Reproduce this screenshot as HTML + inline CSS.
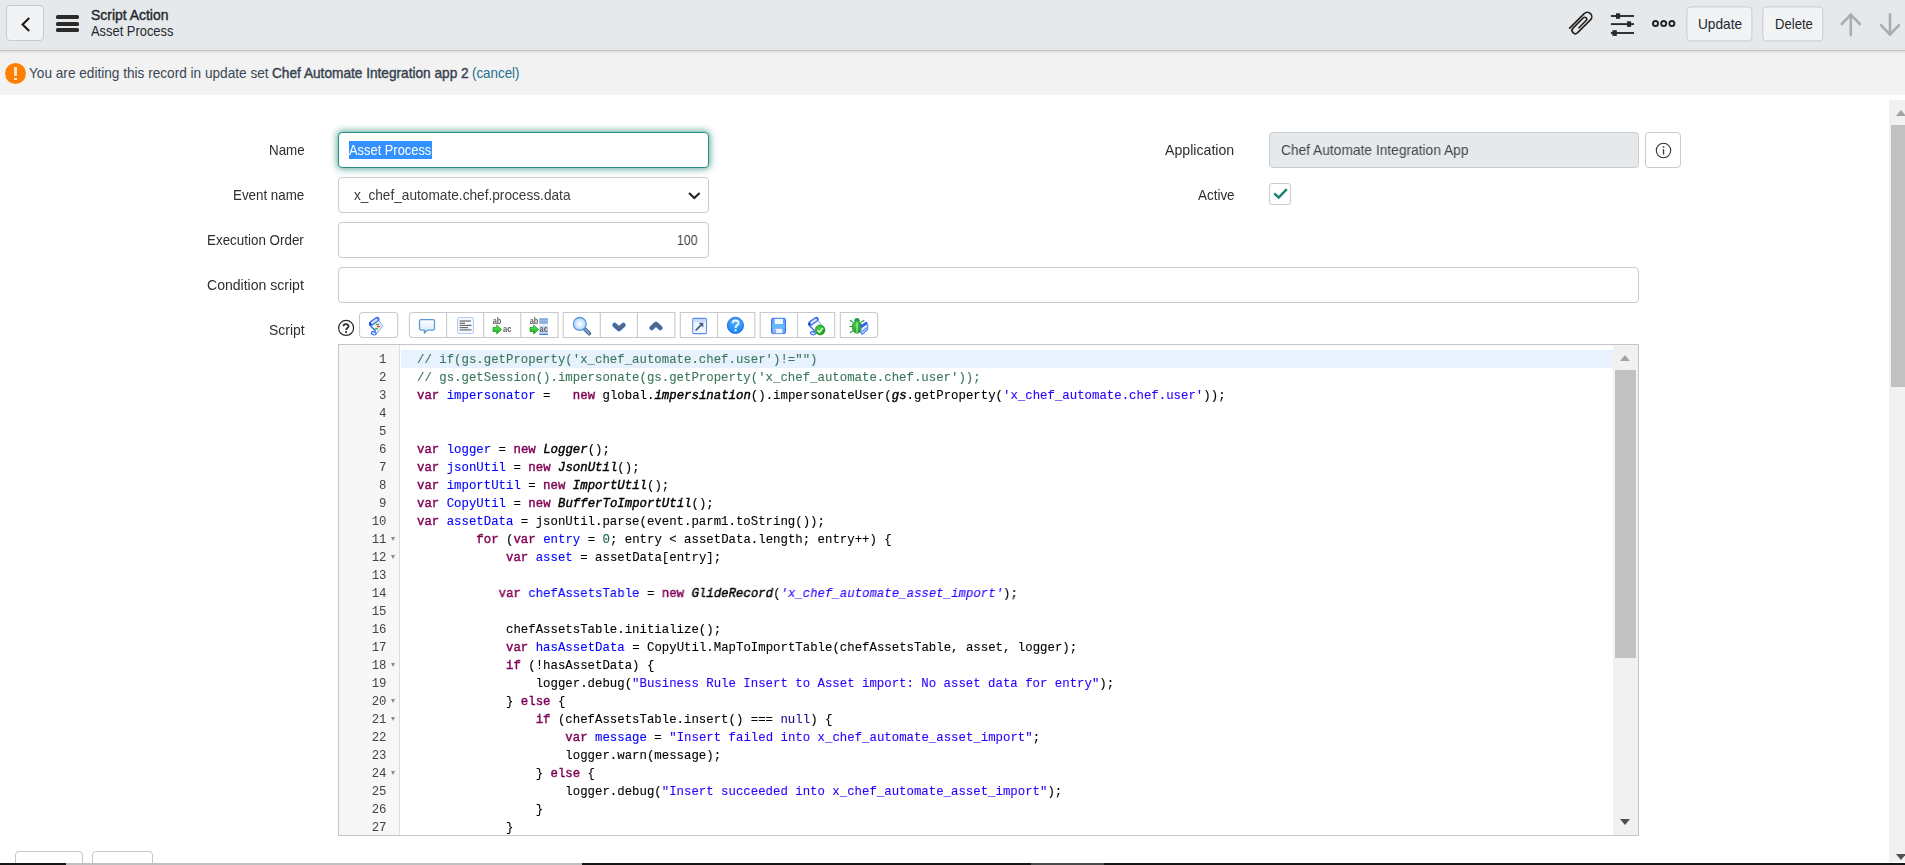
<!DOCTYPE html>
<html><head><meta charset="utf-8"><title>Script Action</title><style>
*{box-sizing:border-box;margin:0;padding:0}
html,body{width:1905px;height:865px;overflow:hidden;background:#fff}
body{position:relative;font-family:"Liberation Sans", sans-serif;font-size:14.5px;color:#2e2e2e}
.abs,.t,.ln,.cl,.fold{position:absolute}
.t{white-space:pre;line-height:1;transform-origin:0 0;display:block}
#hdr{left:0;top:0;width:1905px;height:51px;background:#e6e9eb;border-bottom:1px solid #c2c3c4}
#hshadow{left:0;top:51px;width:1905px;height:3px;background:linear-gradient(#dcdddd,#f2f2f2)}
#note{left:0;top:50px;width:1905px;height:45px;background:#f2f2f2}
.btn{background:#f2f3f5;border:1px solid #c9cacb;border-radius:4px}
.inp{background:#fff;border:1px solid #cbcbcb;border-radius:4px}
.ln,.cl{font-family:"Liberation Mono", monospace;font-size:13.6px;line-height:18px;height:18px;white-space:pre}
.ln{left:339px;width:52.25px;text-align:right;color:#444;transform:scaleX(0.9092);transform-origin:0 0;padding-top:1.00px}
.cl{left:417.3px;color:#000;transform:scaleX(0.9092);transform-origin:0 0;padding-top:1.00px;-webkit-text-stroke:0.12px}
.fold{left:390.9px;width:0;height:0;border-left:2.7px solid transparent;border-right:2.7px solid transparent;border-top:4.2px solid #8a8a8a}
.k{color:#7f0055;-webkit-text-stroke:0.45px #7f0055}
.d{color:#0000ff}
.s{color:#2a00ff}
.si{color:#2a00ff;font-style:italic}
.c{color:#3b775a}
.n{color:#116644}
.a{color:#221199}
.g{font-style:italic;color:#000;-webkit-text-stroke:0.45px #000}
.tb{top:312px;height:26px;border:1px solid #c9c9c9;background:#fff}
.tbd{top:312px;height:26px;width:1px;background:#c9c9c9}
</style></head><body>
<div id="note" class="abs"></div>
<div id="hdr" class="abs"></div>
<div id="hshadow" class="abs"></div>
<div class="abs btn" style="left:6px;top:5px;width:38px;height:36px"></div>
<svg class="abs" style="left:18px;top:13px" width="16" height="22" viewBox="0 0 16 22"><path d="M11.2 4.9 L4.6 11.45 L11.2 18" fill="none" stroke="#1a1a1a" stroke-width="2.1"/></svg>
<div class="abs" style="left:56px;top:15.0px;width:23.3px;height:3.8px;border-radius:1.6px;background:#2a2a2a"></div>
<div class="abs" style="left:56px;top:22.0px;width:23.3px;height:3.8px;border-radius:1.6px;background:#2a2a2a"></div>
<div class="abs" style="left:56px;top:28.1px;width:23.3px;height:3.8px;border-radius:1.6px;background:#2a2a2a"></div>
<div class="abs btn" style="left:1686px;top:6px;width:66.1px;height:35.1px;transform:translate(.4px,.4px)"></div>
<div class="abs btn" style="left:1762px;top:6px;width:61.3px;height:35.1px;transform:translate(.3px,.4px)"></div>
<svg class="abs" style="left:1560px;top:0px" width="345" height="50" viewBox="1560 0 345 50">
<g transform="translate(1568.9,28.85) rotate(-45)"><path d="M0.4 0 L21.6 0 A4.45 4.45 0 0 1 21.6 8.9 L3.45 8.9 A3.25 3.25 0 0 1 3.45 2.4 L18.05 2.4 A1.95 1.95 0 0 1 18.05 6.3 L7.2 6.3" fill="none" stroke="#26221f" stroke-width="1.65"/></g>
<path d="M1610.9 16.0 H1634" stroke="#2a2a2a" stroke-width="1.9"/>
<path d="M1610.9 24.1 H1634" stroke="#2a2a2a" stroke-width="1.9"/>
<path d="M1610.9 33.0 H1634" stroke="#2a2a2a" stroke-width="1.9"/>
<rect x="1616" y="13.3" width="4.1" height="5.5" fill="#2a2a2a"/>
<rect x="1627" y="21.3" width="4.1" height="5.6" fill="#2a2a2a"/>
<rect x="1612.4" y="30.2" width="4.4" height="5.7" fill="#2a2a2a"/>
<circle cx="1655.5" cy="23.5" r="2.55" fill="none" stroke="#242424" stroke-width="1.9"/>
<circle cx="1663.7" cy="23.5" r="2.55" fill="none" stroke="#242424" stroke-width="1.9"/>
<circle cx="1671.9" cy="23.5" r="2.55" fill="none" stroke="#242424" stroke-width="1.9"/>
<path d="M1850.8 35.3 V14.6 M1841.8 24 L1850.8 14.6 L1859.8 24" fill="none" stroke="#aaadaf" stroke-width="2.6" stroke-linecap="round" stroke-linejoin="miter"/>
<path d="M1890 14.2 V34.6 M1881 25.2 L1890 34.6 L1899 25.2" fill="none" stroke="#aaadaf" stroke-width="2.6" stroke-linecap="round" stroke-linejoin="miter"/>
</svg>
<div class="abs" style="left:5px;top:62.9px;width:21px;height:21px;border-radius:50%;background:#ff8000"></div>
<div class="abs" style="left:13.8px;top:66.6px;width:3.2px;height:9px;background:#fde0c6;border-radius:0.6px"></div>
<div class="abs" style="left:13.8px;top:77.7px;width:3.2px;height:2.6px;background:#fde0c6"></div>
<div class="abs inp" style="left:338px;top:132px;width:371px;height:36px;border-color:#278f7f;box-shadow:0 0 7px 1px rgba(30,133,117,.72)"></div>
<div class="abs" style="left:349px;top:141px;width:83px;height:18px;background:#3390ff"></div>
<div class="abs inp" style="left:338px;top:177px;width:371px;height:36px"></div>
<svg class="abs" style="left:686px;top:189px" width="16" height="12" viewBox="0 0 16 12"><path d="M3 4.1 L8.3 9.1 L13.6 4.1" fill="none" stroke="#1f1f1f" stroke-width="2"/></svg>
<div class="abs inp" style="left:338px;top:222px;width:371px;height:36px"></div>
<div class="abs inp" style="left:338px;top:267px;width:1301px;height:36px"></div>
<div class="abs inp" style="left:1269px;top:132px;width:370px;height:36px;background:#e6e9eb;border-color:#c9cdd0"></div>
<div class="abs inp" style="left:1645px;top:132px;width:36px;height:36px"></div>
<svg class="abs" style="left:1655.25px;top:142px" width="17" height="17" viewBox="0 0 17 17"><circle cx="8.5" cy="8.5" r="7.2" fill="none" stroke="#333" stroke-width="1.1"/><rect x="7.9" y="7.2" width="1.3" height="5.3" fill="#333"/><rect x="7.8" y="4.3" width="1.5" height="1.5" fill="#333"/></svg>
<div class="abs inp" style="left:1269px;top:183px;width:22px;height:22px;border-radius:3px"></div>
<svg class="abs" style="left:1271px;top:185px" width="18" height="18" viewBox="0 0 18 18"><path d="M3.3 8.5 L7.7 12.5 L15.8 4.1" fill="none" stroke="#1a8073" stroke-width="2.4"/></svg>
<svg class="abs" style="left:330px;top:305px;will-change:transform" width="560" height="40" viewBox="330 305 560 40">
<defs>
<linearGradient id="gb" x1="0" y1="0" x2="0" y2="1"><stop offset="0" stop-color="#ffffff"/><stop offset="1" stop-color="#d6e6fa"/></linearGradient>
<radialGradient id="gl" cx="0.5" cy="0.5" r="0.55"><stop offset="0" stop-color="#ffffff"/><stop offset="1" stop-color="#a9d3ff"/></radialGradient>
<radialGradient id="gh" cx="0.5" cy="0.3" r="0.8"><stop offset="0" stop-color="#55b1ff"/><stop offset="1" stop-color="#0a7cf5"/></radialGradient>
<radialGradient id="gg" cx="0.4" cy="0.35" r="0.8"><stop offset="0" stop-color="#4fd04f"/><stop offset="1" stop-color="#0e8f0e"/></radialGradient>
<linearGradient id="ga" x1="0" y1="0" x2="0" y2="1"><stop offset="0" stop-color="#6df06d"/><stop offset="1" stop-color="#0ea80e"/></linearGradient>
</defs>
<path d="M363.0 312.5 L394.3 312.5 A3.5 3.5 0 0 1 397.8 316.0 L397.8 334.0 A3.5 3.5 0 0 1 394.3 337.5 L363.0 337.5 A3.5 3.5 0 0 1 359.5 334.0 L359.5 316.0 A3.5 3.5 0 0 1 363.0 312.5 Z" fill="#fff" stroke="#c9c9c9" stroke-width="1.1"/>
<path d="M412.9 312.5 L558.0 312.5 L558.0 337.5 L412.9 337.5 A3.5 3.5 0 0 1 409.4 334.0 L409.4 316.0 A3.5 3.5 0 0 1 412.9 312.5 Z" fill="#fff" stroke="#c9c9c9" stroke-width="1.1"/>
<path d="M446.6 312.5 L446.6 337.5" stroke="#c9c9c9" stroke-width="1.1"/>
<path d="M483.7 312.5 L483.7 337.5" stroke="#c9c9c9" stroke-width="1.1"/>
<path d="M520.8 312.5 L520.8 337.5" stroke="#c9c9c9" stroke-width="1.1"/>
<path d="M563.2 312.5 L674.8 312.5 L674.8 337.5 L563.2 337.5 L563.2 312.5 Z" fill="#fff" stroke="#c9c9c9" stroke-width="1.1"/>
<path d="M600.3 312.5 L600.3 337.5" stroke="#c9c9c9" stroke-width="1.1"/>
<path d="M637.4 312.5 L637.4 337.5" stroke="#c9c9c9" stroke-width="1.1"/>
<path d="M680.3 312.5 L754.8 312.5 L754.8 337.5 L680.3 337.5 L680.3 312.5 Z" fill="#fff" stroke="#c9c9c9" stroke-width="1.1"/>
<path d="M717.5 312.5 L717.5 337.5" stroke="#c9c9c9" stroke-width="1.1"/>
<path d="M760.2 312.5 L834.7 312.5 L834.7 337.5 L760.2 337.5 L760.2 312.5 Z" fill="#fff" stroke="#c9c9c9" stroke-width="1.1"/>
<path d="M797.5 312.5 L797.5 337.5" stroke="#c9c9c9" stroke-width="1.1"/>
<path d="M840.3 312.5 L874.2 312.5 A3.5 3.5 0 0 1 877.7 316.0 L877.7 334.0 A3.5 3.5 0 0 1 874.2 337.5 L840.3 337.5 L840.3 312.5 Z" fill="#fff" stroke="#c9c9c9" stroke-width="1.1"/>
<circle cx="346.1" cy="327.9" r="7.5" fill="none" stroke="#2b2b2b" stroke-width="1.25"/>
<path d="M343.5 326.3 C343.5 323.6 348.6 323.5 348.6 326.2 C348.6 328 346.1 328 346.1 330.1" fill="none" stroke="#2b2b2b" stroke-width="1.75"/>
<rect x="345.2" y="331.1" width="1.8" height="1.8" fill="#2b2b2b"/>
<g transform="translate(0,0)">
<path d="M370.3 325.3 L378.3 319.8 L382.8 325.9 L376.4 334 L373 333.6 L375.3 330.8 Z" fill="#eef4ff" stroke="#7ea4f7" stroke-width="1" stroke-linejoin="round"/>
<path d="M370.2 325.6 L375.4 330.9" stroke="#3f6fe8" stroke-width="1.4" stroke-linecap="round" fill="none"/>
<path d="M371.4 323.2 L377.2 319.3" stroke="#3466e6" stroke-width="4.7" stroke-linecap="round" fill="none"/>
<path d="M372.2 322.7 L376.6 319.8" stroke="#cfe0ff" stroke-width="2.5" stroke-linecap="round" fill="none"/>
<path d="M369.6 324.6 L370.4 323.2" stroke="#1644c8" stroke-width="1.6" stroke-linecap="round" fill="none"/>
<ellipse cx="373.7" cy="333.3" rx="2.5" ry="1.5" transform="rotate(14 373.7 333.3)" fill="#dbe7ff" stroke="#3f74ee" stroke-width="1.1"/>
</g>
<rect x="375.8" y="323.7" width="3.3" height="1.4" fill="#2fc42f"/>
<rect x="376.9" y="325.8" width="3.3" height="1.4" rx="0.7" fill="#ee3a1c"/>
<rect x="374.7" y="327.9" width="3.3" height="1.5" fill="#2fc42f"/>
<path d="M421 319.6 H433 Q434.5 319.6 434.5 321.1 V328.6 Q434.5 330.1 433 330.1 H427.3 L424.3 333.3 L424.6 330.1 H421 Q419.5 330.1 419.5 328.6 V321.1 Q419.5 319.6 421 319.6 Z" fill="url(#gb)" stroke="#5b98d8" stroke-width="1.25" stroke-linejoin="round"/>
<rect x="457.6" y="317.5" width="15.8" height="16" rx="1.6" fill="#f4f8ff" stroke="#b4c6fb" stroke-width="1"/>
<path d="M459.6 321 L471 321" stroke="#6a6a6a" stroke-width="1.2"/>
<path d="M459.6 323.2 L465 323.2" stroke="#6a6a6a" stroke-width="1.2"/>
<path d="M459.6 325.4 L471.5 325.4" stroke="#6a6a6a" stroke-width="1.2"/>
<path d="M459.6 327.6 L468 327.6" stroke="#6a6a6a" stroke-width="1.2"/>
<path d="M459.6 329.9 L471.5 329.9" stroke="#6a6a6a" stroke-width="1.2"/>
<text x="492.7" y="323.6" font-family="Liberation Sans, sans-serif" font-size="8.6" font-weight="700" fill="#5a5a5a" textLength="8.6" lengthAdjust="spacingAndGlyphs">ab</text>
<path d="M493 327.5 H496.7 V325 L501.6 329.5 L496.7 334 V331.5 H493 Z" fill="url(#ga)" stroke="#0c9a0c" stroke-width="0.7" stroke-linejoin="round"/>
<text x="503" y="331.7" font-family="Liberation Sans, sans-serif" font-size="8.6" font-weight="700" fill="#5a5a5a" textLength="8.4" lengthAdjust="spacingAndGlyphs">ac</text>
<text x="529.7" y="323.6" font-family="Liberation Sans, sans-serif" font-size="8.6" font-weight="700" fill="#5a5a5a" textLength="8.6" lengthAdjust="spacingAndGlyphs">ab</text>
<path d="M530 327.5 H533.7 V325 L538.6 329.5 L533.7 334 V331.5 H530 Z" fill="url(#ga)" stroke="#0c9a0c" stroke-width="0.7" stroke-linejoin="round"/>
<rect x="539.3" y="318" width="8.6" height="6.2" fill="#a9c4e8"/>
<path d="M539.3 319.3 H547.9" stroke="#6f9ad6" stroke-width="0.8"/>
<path d="M539.3 321.1 H547.9" stroke="#6f9ad6" stroke-width="0.8"/>
<path d="M539.3 322.9 H547.9" stroke="#6f9ad6" stroke-width="0.8"/>
<rect x="539.3" y="325.6" width="8.6" height="8.2" fill="#c9dbf3"/>
<path d="M539.3 334.3 H547.9" stroke="#2f6fea" stroke-width="1.2"/>
<text x="539.6" y="332.2" font-family="Liberation Sans, sans-serif" font-size="8.6" font-weight="700" fill="#5a5a5a" textLength="8.2" lengthAdjust="spacingAndGlyphs">ac</text>
<path d="M584.6 328.9 L589.4 333.6" stroke="#3f4f66" stroke-width="3.6" stroke-linecap="round"/>
<path d="M585.2 329.5 L589.2 333.4" stroke="#6aa2e6" stroke-width="2.2" stroke-linecap="round"/>
<circle cx="579.8" cy="323.9" r="6.4" fill="url(#gl)" stroke="#5a97dc" stroke-width="1.3"/>
<path d="M614.6 325 L619 329 L623.4 325" fill="none" stroke="#2f74d0" stroke-width="4.6" stroke-linecap="round" stroke-linejoin="round"/>
<path d="M614.6 325 L619 329 L623.4 325" fill="none" stroke="#5e6670" stroke-width="2.4" stroke-linecap="round" stroke-linejoin="round"/>
<path d="M651.6 328 L656 324 L660.4 328" fill="none" stroke="#2f74d0" stroke-width="4.6" stroke-linecap="round" stroke-linejoin="round"/>
<path d="M651.6 328 L656 324 L660.4 328" fill="none" stroke="#5e6670" stroke-width="2.4" stroke-linecap="round" stroke-linejoin="round"/>
<rect x="692.7" y="318.4" width="13.8" height="15.2" rx="1.2" fill="#f1f6fd" stroke="#5b8df0" stroke-width="1.1"/>
<rect x="693.3" y="319" width="12.6" height="3" fill="#c6dcf8"/>
<path d="M696.2 329.9 L702 324.1" stroke="#46618c" stroke-width="1.8" stroke-linecap="round"/>
<path d="M698.6 322.8 H703.3 V327.5 Z" fill="#46618c"/>
<circle cx="735.4" cy="325.4" r="8.1" fill="url(#gh)" stroke="#2a66d4" stroke-width="0.9"/>
<path d="M732.6 323.2 C732.6 319.8 738.6 319.6 738.6 323 C738.6 325.3 735.6 325.3 735.6 327.9" fill="none" stroke="#f4f9ff" stroke-width="1.9"/>
<rect x="734.6" y="329.3" width="2" height="2" fill="#f4f9ff"/>
<rect x="771.5" y="318.3" width="14" height="15.3" rx="1.5" fill="#58a6ff" stroke="#3b70ea" stroke-width="1"/>
<rect x="774.6" y="318.9" width="8.3" height="5.2" fill="#f3f8ff"/>
<rect x="772.1" y="324.2" width="12.8" height="3.9" fill="#62bcf7"/>
<rect x="773.7" y="328.7" width="8.8" height="4.6" fill="#e6f0fd"/>
<rect x="774.4" y="329.3" width="1.2" height="4" fill="#5b7fe8"/>
<g transform="translate(439.2,0)">
<path d="M370.3 325.3 L378.3 319.8 L382.8 325.9 L376.4 334 L373 333.6 L375.3 330.8 Z" fill="#eef4ff" stroke="#7ea4f7" stroke-width="1" stroke-linejoin="round"/>
<path d="M370.2 325.6 L375.4 330.9" stroke="#3f6fe8" stroke-width="1.4" stroke-linecap="round" fill="none"/>
<path d="M371.4 323.2 L377.2 319.3" stroke="#3466e6" stroke-width="4.7" stroke-linecap="round" fill="none"/>
<path d="M372.2 322.7 L376.6 319.8" stroke="#cfe0ff" stroke-width="2.5" stroke-linecap="round" fill="none"/>
<path d="M369.6 324.6 L370.4 323.2" stroke="#1644c8" stroke-width="1.6" stroke-linecap="round" fill="none"/>
<ellipse cx="373.7" cy="333.3" rx="2.5" ry="1.5" transform="rotate(14 373.7 333.3)" fill="#dbe7ff" stroke="#3f74ee" stroke-width="1.1"/>
</g>
<circle cx="820.1" cy="330" r="4.9" fill="url(#gg)" stroke="#0b8a0b" stroke-width="0.6"/>
<path d="M817.4 330.2 L819.4 332.3 L822.9 327.9" fill="none" stroke="#eaffea" stroke-width="1.5"/>
<path d="M852.5 322 L850.3 320.5" stroke="#1f9d4a" stroke-width="1.2" stroke-linecap="round"/>
<path d="M852 326.5 L849.9 326.5" stroke="#1f9d4a" stroke-width="1.2" stroke-linecap="round"/>
<path d="M852.5 331 L850.3 332.5" stroke="#1f9d4a" stroke-width="1.2" stroke-linecap="round"/>
<path d="M861.5 322 L863.9 320.5" stroke="#1f9d4a" stroke-width="1.2" stroke-linecap="round"/>
<ellipse cx="857" cy="320.2" rx="2.6" ry="2.2" fill="#1f9d4a"/>
<ellipse cx="857" cy="327" rx="4.7" ry="6.2" fill="url(#gg)" stroke="#189a3c" stroke-width="0.8"/>
<path d="M857 321.5 V332.8" stroke="#c9f5c9" stroke-width="0.9"/>
<path d="M861.2 327 L866.4 323.2 L867.8 325.2 L867.6 329.5 L862.4 334.4 L860.6 332.6 Z" fill="#dbe7ff" stroke="#4c80f0" stroke-width="1.1" stroke-linejoin="round"/>
<path d="M861.6 326.4 L866.2 323.1" stroke="#2f62e6" stroke-width="2.6" stroke-linecap="round"/>
<path d="M861.3 332.4 L866.8 327.6" stroke="#4c80f0" stroke-width="1.1"/>
</svg>
<div class="abs" style="left:338px;top:344px;width:1301px;height:492px;border:1px solid #c6c6c6;background:#fff"></div>
<div class="abs" style="left:339px;top:345px;width:61px;height:490px;background:#f7f7f7;border-right:1px solid #ddd"></div>
<div class="abs" style="left:401px;top:350px;width:1212px;height:17.5px;background:#e8f2ff"></div>
<div class="abs" style="left:1613px;top:345px;width:25px;height:490px;background:#f1f1f1"></div>
<div class="abs" style="left:1615px;top:370px;width:21px;height:288px;background:#c1c1c1"></div>
<div class="abs" style="left:1619.9px;top:355px;width:0;height:0;border-left:5.6px solid transparent;border-right:5.6px solid transparent;border-bottom:6px solid #a3a3a3"></div>
<div class="abs" style="left:1619.9px;top:819px;width:0;height:0;border-left:5.6px solid transparent;border-right:5.6px solid transparent;border-top:6px solid #505050"></div>
<div class="abs" style="left:0;top:0;width:0;height:0;will-change:transform">
<div class="ln" style="top:349.5px">1</div>
<div class="cl" style="top:349.5px"><span class="c">// if(gs.getProperty('x_chef_automate.chef.user')!="")</span></div>
<div class="ln" style="top:367.5px">2</div>
<div class="cl" style="top:367.5px"><span class="c">// gs.getSession().impersonate(gs.getProperty('x_chef_automate.chef.user'));</span></div>
<div class="ln" style="top:385.5px">3</div>
<div class="cl" style="top:385.5px"><span class="k">var</span> <span class="d">impersonator</span> =   <span class="k">new</span> global.<span class="g">impersination</span>().impersonateUser(<span class="g">gs</span>.getProperty(<span class="s">'x_chef_automate.chef.user'</span>));</div>
<div class="ln" style="top:403.5px">4</div>
<div class="ln" style="top:421.5px">5</div>
<div class="ln" style="top:439.5px">6</div>
<div class="cl" style="top:439.5px"><span class="k">var</span> <span class="d">logger</span> = <span class="k">new</span> <span class="g">Logger</span>();</div>
<div class="ln" style="top:457.5px">7</div>
<div class="cl" style="top:457.5px"><span class="k">var</span> <span class="d">jsonUtil</span> = <span class="k">new</span> <span class="g">JsonUtil</span>();</div>
<div class="ln" style="top:475.5px">8</div>
<div class="cl" style="top:475.5px"><span class="k">var</span> <span class="d">importUtil</span> = <span class="k">new</span> <span class="g">ImportUtil</span>();</div>
<div class="ln" style="top:493.5px">9</div>
<div class="cl" style="top:493.5px"><span class="k">var</span> <span class="d">CopyUtil</span> = <span class="k">new</span> <span class="g">BufferToImportUtil</span>();</div>
<div class="ln" style="top:511.5px">10</div>
<div class="cl" style="top:511.5px"><span class="k">var</span> <span class="d">assetData</span> = jsonUtil.parse(event.parm1.toString());</div>
<div class="ln" style="top:529.5px">11</div>
<div class="fold" style="top:536.7px"></div>
<div class="cl" style="top:529.5px">        <span class="k">for</span> (<span class="k">var</span> <span class="d">entry</span> = <span class="n">0</span>; entry &lt; assetData.length; entry++) {</div>
<div class="ln" style="top:547.5px">12</div>
<div class="fold" style="top:554.7px"></div>
<div class="cl" style="top:547.5px">            <span class="k">var</span> <span class="d">asset</span> = assetData[entry];</div>
<div class="ln" style="top:565.5px">13</div>
<div class="ln" style="top:583.5px">14</div>
<div class="cl" style="top:583.5px">           <span class="k">var</span> <span class="d">chefAssetsTable</span> = <span class="k">new</span> <span class="g">GlideRecord</span>(<span class="si">'x_chef_automate_asset_import'</span>);</div>
<div class="ln" style="top:601.5px">15</div>
<div class="ln" style="top:619.5px">16</div>
<div class="cl" style="top:619.5px">            chefAssetsTable.initialize();</div>
<div class="ln" style="top:637.5px">17</div>
<div class="cl" style="top:637.5px">            <span class="k">var</span> <span class="d">hasAssetData</span> = CopyUtil.MapToImportTable(chefAssetsTable, asset, logger);</div>
<div class="ln" style="top:655.5px">18</div>
<div class="fold" style="top:662.7px"></div>
<div class="cl" style="top:655.5px">            <span class="k">if</span> (!hasAssetData) {</div>
<div class="ln" style="top:673.5px">19</div>
<div class="cl" style="top:673.5px">                logger.debug(<span class="s">"Business Rule Insert to Asset import: No asset data for entry"</span>);</div>
<div class="ln" style="top:691.5px">20</div>
<div class="fold" style="top:698.7px"></div>
<div class="cl" style="top:691.5px">            } <span class="k">else</span> {</div>
<div class="ln" style="top:709.5px">21</div>
<div class="fold" style="top:716.7px"></div>
<div class="cl" style="top:709.5px">                <span class="k">if</span> (chefAssetsTable.insert() === <span class="a">null</span>) {</div>
<div class="ln" style="top:727.5px">22</div>
<div class="cl" style="top:727.5px">                    <span class="k">var</span> <span class="d">message</span> = <span class="s">"Insert failed into x_chef_automate_asset_import"</span>;</div>
<div class="ln" style="top:745.5px">23</div>
<div class="cl" style="top:745.5px">                    logger.warn(message);</div>
<div class="ln" style="top:763.5px">24</div>
<div class="fold" style="top:770.7px"></div>
<div class="cl" style="top:763.5px">                } <span class="k">else</span> {</div>
<div class="ln" style="top:781.5px">25</div>
<div class="cl" style="top:781.5px">                    logger.debug(<span class="s">"Insert succeeded into x_chef_automate_asset_import"</span>);</div>
<div class="ln" style="top:799.5px">26</div>
<div class="cl" style="top:799.5px">                }</div>
<div class="ln" style="top:817.5px">27</div>
<div class="cl" style="top:817.5px">            }</div>
<span class="t" style='left:268.50px;top:142.73px;font-size:14.5px;font-weight:400;color:#2e2e2e;transform:scaleX(0.9228);'>Name</span>
<span class="t" style='left:232.90px;top:187.73px;font-size:14.5px;font-weight:400;color:#2e2e2e;transform:scaleX(0.9213);'>Event name</span>
<span class="t" style='left:207.40px;top:232.73px;font-size:14.5px;font-weight:400;color:#2e2e2e;transform:scaleX(0.9238);'>Execution Order</span>
<span class="t" style='left:207.40px;top:277.73px;font-size:14.5px;font-weight:400;color:#2e2e2e;transform:scaleX(0.9686);'>Condition script</span>
<span class="t" style='left:268.50px;top:322.73px;font-size:14.5px;font-weight:400;color:#2e2e2e;transform:scaleX(0.9628);'>Script</span>
<span class="t" style='left:1165.40px;top:142.73px;font-size:14.5px;font-weight:400;color:#2e2e2e;transform:scaleX(0.9755);'>Application</span>
<span class="t" style='left:1198.00px;top:187.73px;font-size:14.5px;font-weight:400;color:#2e2e2e;transform:scaleX(0.9266);'>Active</span>
<span class="t" style='left:349.30px;top:142.73px;font-size:14.5px;font-weight:400;color:#ffffff;transform:scaleX(0.8881);'>Asset Process</span>
<span class="t" style='left:353.50px;top:187.73px;font-size:14.5px;font-weight:400;color:#3a3a3a;transform:scaleX(0.9424);'>x_chef_automate.chef.process.data</span>
<span class="t" style='left:677.00px;top:232.73px;font-size:14.5px;font-weight:400;color:#3a3a3a;transform:scaleX(0.8470);'>100</span>
<span class="t" style='left:1280.50px;top:142.73px;font-size:14.5px;font-weight:400;color:#444;transform:scaleX(0.9494);'>Chef Automate Integration App</span>
</div>
<div class="abs" style="left:1889px;top:100px;width:16px;height:762px;background:#f1f1f1"></div>
<div class="abs" style="left:1891px;top:125px;width:14px;height:262px;background:#c1c1c1"></div>
<div class="abs" style="left:1895.8px;top:110px;width:0;height:0;border-left:5.6px solid transparent;border-right:5.6px solid transparent;border-bottom:6px solid #a3a3a3"></div>
<div class="abs" style="left:1895.8px;top:854px;width:0;height:0;border-left:5.6px solid transparent;border-right:5.6px solid transparent;border-top:6px solid #505050"></div>
<div class="abs" style="left:15px;top:851px;width:68px;height:20px;border:1px solid #c6c6c6;border-radius:4px;background:#fff"></div>
<div class="abs" style="left:92px;top:851px;width:60.5px;height:20px;border:1px solid #c6c6c6;border-radius:4px;background:#fff"></div>
<div class="abs" style="left:0;top:863px;width:1905px;height:2px;background:#161616"></div>
<div class="abs" style="left:66px;top:863px;width:516px;height:2px;background:#c0c0c0"></div>
<div class="abs" style="left:1031px;top:863px;width:73px;height:2px;background:#4a4a4a"></div>
<span class="t" style='left:90.80px;top:7.73px;font-size:14.5px;font-weight:400;color:#23282e;transform:scaleX(0.9604);-webkit-text-stroke:0.4px #23282e;'>Script Action</span>
<span class="t" style='left:90.80px;top:23.73px;font-size:14.5px;font-weight:400;color:#23282e;transform:scaleX(0.8892);'>Asset Process</span>
<span class="t" style='left:1698.20px;top:16.73px;font-size:14.5px;font-weight:400;color:#23282e;transform:scaleX(0.9430);'>Update</span>
<span class="t" style='left:1774.70px;top:16.73px;font-size:14.5px;font-weight:400;color:#23282e;transform:scaleX(0.9041);'>Delete</span>
<span class="t" style='left:29.10px;top:65.73px;font-size:14.5px;font-weight:400;color:#3b4753;transform:scaleX(0.9396);'>You are editing this record in update set</span>
<span class="t" style='left:272.10px;top:65.73px;font-size:14.5px;font-weight:400;color:#36414d;transform:scaleX(0.9421);-webkit-text-stroke:0.4px #36414d;'>Chef Automate Integration app 2</span>
<span class="t" style='left:472.30px;top:65.73px;font-size:14.5px;font-weight:400;color:#24708c;transform:scaleX(0.9209);'>(cancel)</span>
</body></html>
